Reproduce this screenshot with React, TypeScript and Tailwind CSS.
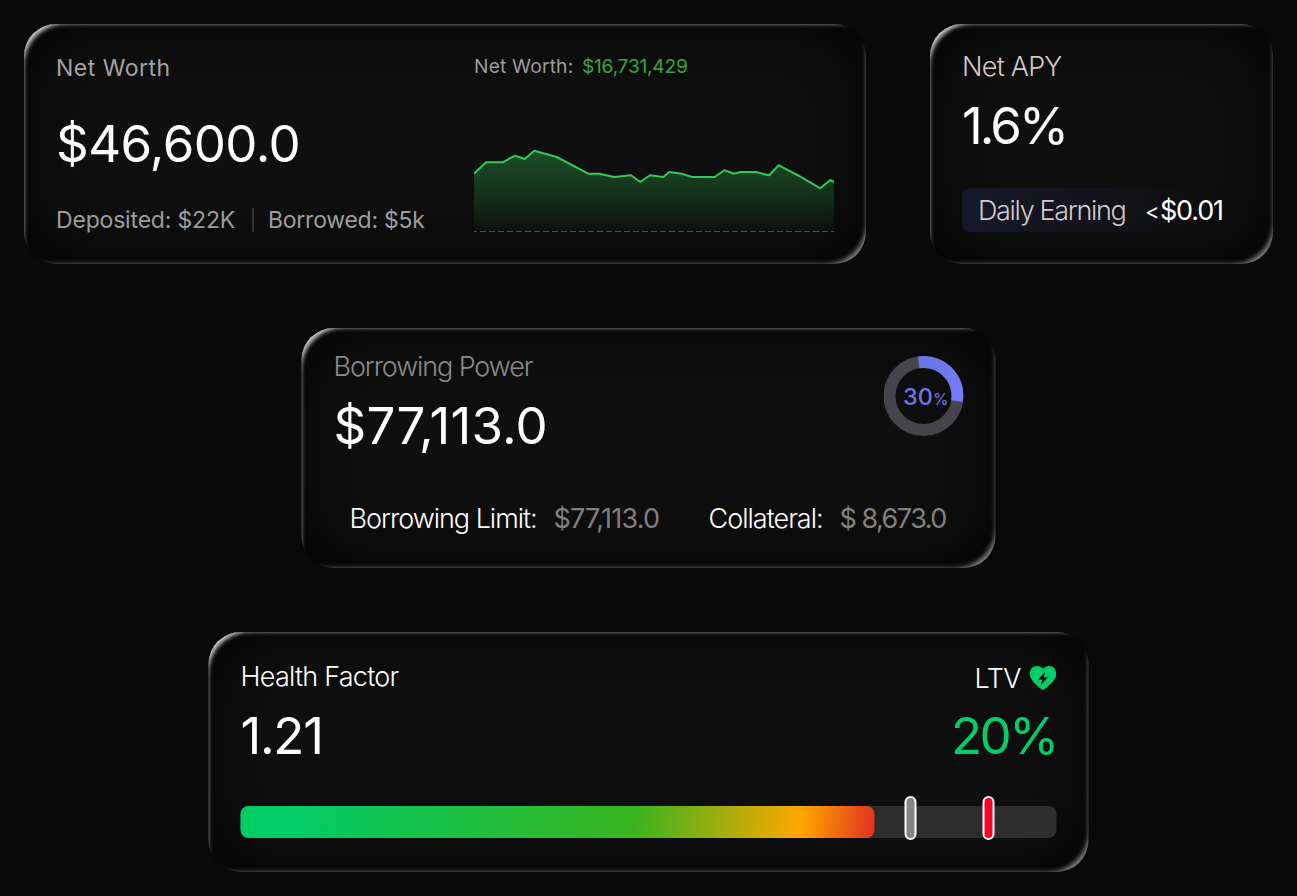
import type { ReactNode } from 'react';
import clsx from 'clsx';

const trend =
  '0,33.7 12,22.3 28.7,22.3 41,15.7 50.7,19 60.3,10.7 82.7,17 114.3,33.7 125,33.7 140.3,37 157,35.3 166.3,42 176,35.3 189.3,37 195.3,32 207.7,33.7 218,37 240.7,37 250.3,30.3 260,33.7 266.7,32 282,32 295.3,35.3 304.7,25.3 325.3,36 346.3,48.3 356.3,40 360,42';

function GlassCard({ className, children }: { className?: string; children: ReactNode }) {
  return (
    <section
      className={clsx(
        'h-[240px] shrink-0 rounded-[32px] bg-[#0f0f0f]',
        'shadow-[inset_9px_9px_5px_-9px_rgba(255,255,255,0.32),inset_11px_11px_4px_-12.5px_rgba(255,255,255,0.75),inset_-9px_-9px_5px_-9px_rgba(255,255,255,0.36),inset_-10px_-10px_4px_-12px_rgba(255,255,255,0.22),inset_0_0_72px_rgba(0,0,0,0.95)]',
        className,
      )}
    >
      {children}
    </section>
  );
}

function NetWorthChart() {
  return (
    <svg width="360" height="94" viewBox="0 0 360 94" className="mt-[62px] block">
      <defs>
        <linearGradient id="trend-fill" x1="0" y1="10" x2="0" y2="92" gradientUnits="userSpaceOnUse">
          <stop offset="0" stopColor="#34c759" stopOpacity="0.34" />
          <stop offset="0.5" stopColor="#34c759" stopOpacity="0.2" />
          <stop offset="1" stopColor="#34c759" stopOpacity="0.02" />
        </linearGradient>
      </defs>
      <polygon points={`${trend} 360,91 0,91`} fill="url(#trend-fill)" />
      <polyline points={trend} fill="none" stroke="#34c759" strokeWidth="2" strokeLinejoin="round" />
      <line x1="0" y1="91.5" x2="360" y2="91.5" stroke="#34c759" strokeOpacity="0.5" strokeDasharray="6 3" strokeDashoffset="3" />
    </svg>
  );
}

function NetWorthCard() {
  return (
    <GlassCard className="flex w-[842px] justify-between pr-8 pl-8">
      <div className="pt-[29px]">
        <h2 className="text-[23px] leading-[30px] tracking-[0.5px] text-[#a3a3a3]">Net Worth</h2>
        <p className="mt-[31px] text-[51px] leading-[60px] tracking-[-0.57px] text-white">$46,600.0</p>
        <div className="mt-[31px] flex items-center text-[23px] leading-[30px] text-[#9d9d9d]">
          <span className="w-[196px] tracking-[-0.18px]">Deposited: $22K</span>
          <span className="h-6 w-0.5 bg-[#333333]" />
          <span className="ml-[14px] tracking-[-0.25px]">Borrowed: $5k</span>
        </div>
      </div>
      <div className="w-[360px] pt-[30px]">
        <div className="flex text-[19.25px] leading-6">
          <span className="w-[108px] tracking-[0.16px] text-[#9c9c9c]">Net Worth:</span>
          <span className="tracking-[-0.28px] text-[#34a83a]">$16,731,429</span>
        </div>
        <NetWorthChart />
      </div>
    </GlassCard>
  );
}

function NetApyCard() {
  return (
    <GlassCard className="w-[343px] pt-[26px] pr-8 pl-8">
      <h2 className="text-[27px] leading-[34px] font-light tracking-[-0.76px] text-[#d2c8c8]">Net APY</h2>
      <p className="mt-3 text-[51px] leading-[60px] tracking-[-2.92px] text-white">1.6%</p>
      <div className="mt-8 flex h-11 items-center rounded-lg bg-linear-to-r from-[#171829] to-transparent to-90% pt-0.5 pl-4 text-[27px] leading-[34px]">
        <span className="w-[167px] font-light tracking-[-1.33px] text-[#d2c8c8]">Daily Earning</span>
        <span className="w-[15px] text-[22px] text-white">&lt;</span>
        <span className="tracking-[-1.2px] text-white">$0.01</span>
      </div>
    </GlassCard>
  );
}

function BorrowDonut() {
  return (
    <div className="relative mt-1.5 mr-8 h-20 w-20">
      <svg width="80" height="80" viewBox="0 0 80 80" className="block">
        <defs>
          <linearGradient id="donut" x1="0" y1="0" x2="1" y2="0">
            <stop offset="0" stopColor="#6a73e0" />
            <stop offset="1" stopColor="#727cf5" />
          </linearGradient>
        </defs>
        <circle cx="40" cy="40" r="34" fill="none" stroke="#45444a" strokeWidth="12" />
        <path d="M35.09 6.36A34 34 0 0 1 73.62 45.08" fill="none" stroke="url(#donut)" strokeWidth="12" />
      </svg>
      <p className="absolute top-[25px] left-5 flex items-baseline leading-8 text-[#6b74e0]">
        <span className="w-[30px] text-[23.5px] font-medium">30</span>
        <span className="text-[15.5px] font-medium">%</span>
      </p>
    </div>
  );
}

function BorrowingCard() {
  return (
    <GlassCard className="w-[694px] -translate-x-[0.5px] pt-[22px] pl-[32.5px]">
      <div className="flex justify-between">
        <div>
          <h2 className="text-[27px] leading-[34px] font-light tracking-[-1.12px] text-[#8a8a8a]">Borrowing Power</h2>
          <p className="mt-3 text-[51px] leading-[60px] tracking-[0.18px] text-white">$77,113.0</p>
        </div>
        <BorrowDonut />
      </div>
      <div className="mt-[46px] flex pl-4 text-[27px] leading-[34px]">
        <span className="w-[204px] font-light tracking-[-1.02px] text-white">Borrowing Limit:</span>
        <span className="w-[155px] tracking-[-0.76px] text-[#808080]">$77,113.0</span>
        <span className="w-[131px] font-light tracking-[-0.99px] text-white">Collateral:</span>
        <span className="tracking-[-1.5px] text-[#808080]">$ 8,673.0</span>
      </div>
    </GlassCard>
  );
}

function HeartBolt() {
  return (
    <svg width="27" height="24" viewBox="0 0 27 24" className="mt-0.5 block">
      <path
        fill="#00ce66"
        fillRule="evenodd"
        d="M13.5 2.7C15.2.9 17.400 0 19.600 0c4.200 0 7.100 3.300 7.100 7.700 0 6.500-7.400 11.800-11.300 15.300-1.200 1.100-2.600 1.100-3.800 0C7.700 19.500.3 14.200.3 7.700.3 3.300 3.200 0 7.400 0c2.200 0 4.400.9 6.100 2.700ZM15.900 5.600 8.700 13.400h4.100l-1.600 5.900 7.200-8h-4.200l1.700-5.700Z"
      />
    </svg>
  );
}

function HealthCard() {
  return (
    <GlassCard className="w-[880px] -translate-x-[0.5px] pt-7 pr-8 pl-8">
      <div className="flex justify-between">
        <div className="pl-[0.5px]">
          <h2 className="text-[27px] leading-[34px] font-light tracking-[-0.76px] text-white">Health Factor</h2>
          <p className="mt-3 text-[51px] leading-[60px] tracking-[-1.3px] text-white">1.21</p>
        </div>
        <div className="w-[105px]">
          <div className="flex h-[34px] items-center justify-end gap-2">
            <span className="pt-1 text-[27px] leading-[34px] font-light tracking-[-0.5px] text-white">LTV</span>
            <HeartBolt />
          </div>
          <p className="mt-3 text-[51px] leading-[60px] tracking-[-2.5px] text-[#00ce66]">20%</p>
        </div>
      </div>
      <div className="relative mt-10 h-8 rounded-lg bg-[#2d2d2d]">
        <div className="h-8 w-[634px] rounded-lg bg-[linear-gradient(97deg,#00cc66_8%,#38b41f_62%,#ffa800_88%,#e03020_100%)]" />
        <span className="absolute -top-2.5 left-[664px] h-11 w-3 rounded-full border-2 border-white bg-[#858585]" />
        <span className="absolute -top-2.5 left-[742px] h-11 w-3 rounded-full border-2 border-white bg-[#ff0020]" />
      </div>
    </GlassCard>
  );
}

export default function App() {
  return (
    <main className="flex h-[896px] w-[1297px] flex-col gap-16 overflow-hidden bg-[#090909] p-6 font-['Inter',sans-serif]">
      <div className="flex justify-between">
        <NetWorthCard />
        <NetApyCard />
      </div>
      <div className="flex justify-center">
        <BorrowingCard />
      </div>
      <div className="flex justify-center">
        <HealthCard />
      </div>
    </main>
  );
}
